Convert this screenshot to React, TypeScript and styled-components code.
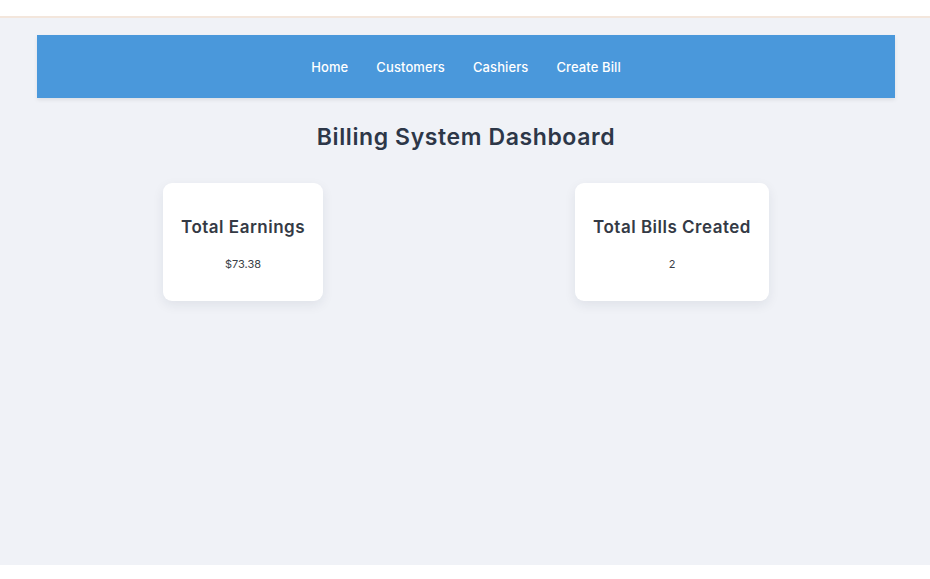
import React from "react";
import styled, { createGlobalStyle } from "styled-components";

const Global = createGlobalStyle`
  html, body { margin: 0; padding: 0; background: #ffffff; }
  body { font-family: "Inter", "Noto Sans", sans-serif; }
  * { box-sizing: border-box; }
`;

const Page = styled.div`
  margin-top: 16px;
  height: 549px;
  border-top: 2px solid #f3e6dc;
  background: #f0f2f7;
  padding: 17px 35px 0 37px;
`;

const NavBar = styled.nav`
  height: 63px;
  background: #4a98db;
  display: flex;
  align-items: center;
  justify-content: center;
  gap: 28px;
  box-shadow: 0 2px 4px rgba(0, 0, 0, 0.08);
`;

const NavLink = styled.a`
  color: #ffffff;
  font-size: 13px;
  font-weight: 500;
  letter-spacing: 0.1px;
  text-decoration: none;
  cursor: pointer;
`;

const Title = styled.h1`
  margin: 24px 0 31px;
  text-align: center;
  font-size: 23px;
  line-height: 30px;
  font-weight: 600;
  color: #2d3748;
  letter-spacing: 0.6px;
`;

const CardRow = styled.div`
  display: flex;
  justify-content: space-around;
  align-items: flex-start;
`;

const Card = styled.div`
  background: #ffffff;
  border-radius: 9px;
  padding: 32px 18px 29px;
  text-align: center;
  box-shadow: 0 4px 12px rgba(30, 40, 70, 0.08);
`;

const CardTitle = styled.h3`
  margin: 0 0 17px;
  font-size: 17px;
  line-height: 24px;
  font-weight: 600;
  color: #343a45;
  letter-spacing: 0.5px;
  white-space: nowrap;
`;

const CardValue = styled.p`
  margin: 0;
  font-size: 11px;
  line-height: 16px;
  color: #3a3f47;
`;

const stats = [
  { label: "Total Earnings", value: "$73.38" },
  { label: "Total Bills Created", value: "2" },
];

export default function App() {
  return (
    <>
      <Global />
      <Page>
        <NavBar>
          <NavLink>Home</NavLink>
          <NavLink>Customers</NavLink>
          <NavLink>Cashiers</NavLink>
          <NavLink>Create Bill</NavLink>
        </NavBar>
        <Title>Billing System Dashboard</Title>
        <CardRow>
          {stats.map((s) => (
            <Card key={s.label}>
              <CardTitle>{s.label}</CardTitle>
              <CardValue>{s.value}</CardValue>
            </Card>
          ))}
        </CardRow>
      </Page>
    </>
  );
}
